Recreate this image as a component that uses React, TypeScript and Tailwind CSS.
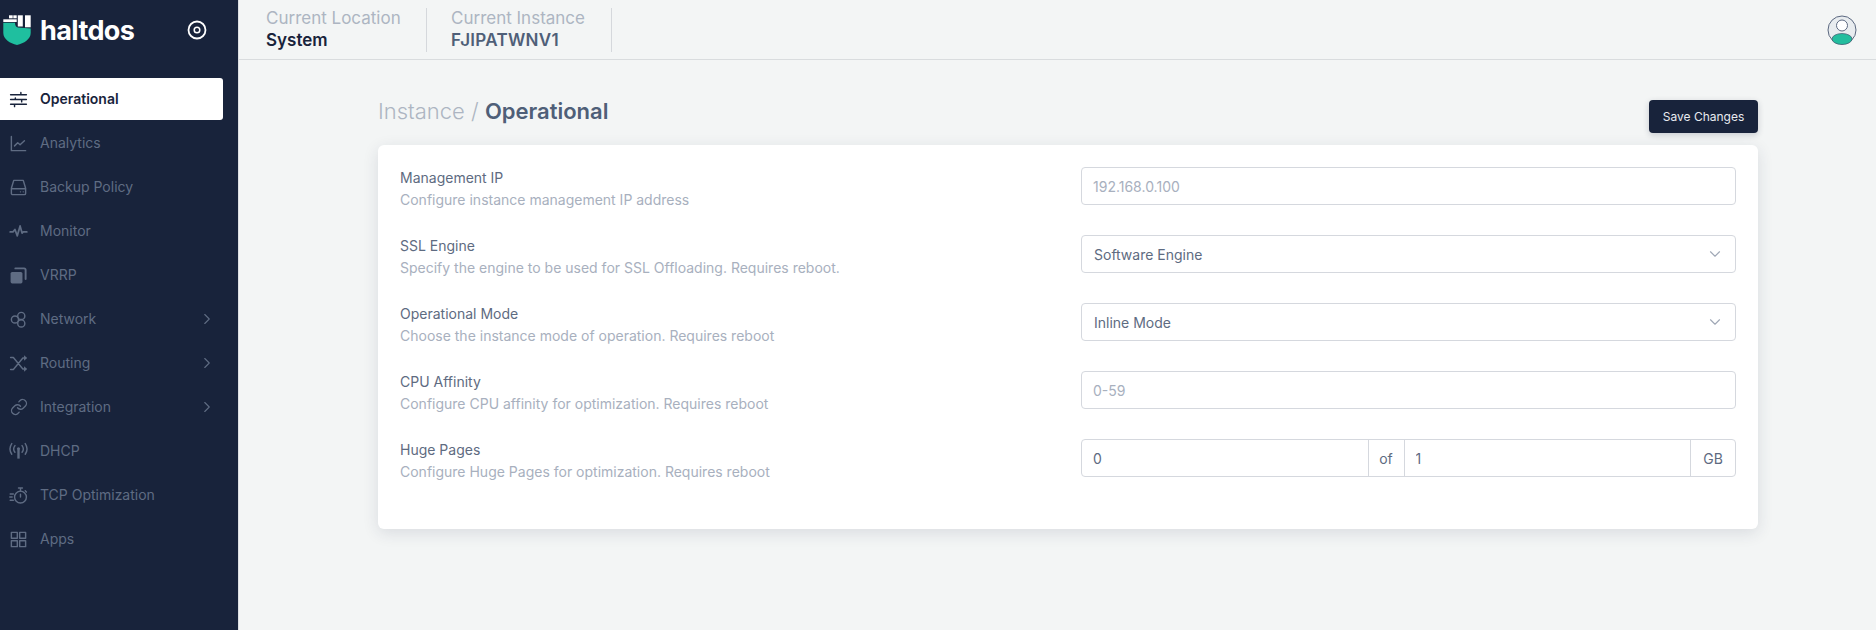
import React from "react";
import { ChevronDown, ChevronRight, Link } from "lucide-react";

function Svg({ children }: { children: React.ReactNode }) {
  return (
    <svg viewBox="0 0 24 24" fill="none" stroke="currentColor" strokeWidth="1.8" strokeLinecap="round" strokeLinejoin="round" className="h-[19px] w-[19px]">
      {children}
    </svg>
  );
}

const OperationalIcon = () => (
  <Svg>
    <path d="M2 6h20M15 3v3M2 12h20M16 12v3M8 12v-2M2 18h20M7 18v3" />
  </Svg>
);
const AnalyticsIcon = () => (
  <Svg>
    <path d="M3 3v18h18M7 15l4-4 3 2.500 5.500-5" />
  </Svg>
);
const BackupIcon = () => (
  <Svg>
    <path d="M6 3h12l3 10v6.500a1.500 1.500 0 0 1-1.500 1.500h-15A1.500 1.500 0 0 1 3 19.500V13L6 3zM3 13.500h18M14.500 17.500h.01M18 17.500h.01" />
  </Svg>
);
const MonitorIcon = () => (
  <Svg>
    <path d="M1.500 12.500H5l2.500-3 3 8L14 5l2.500 9 1.500-1.500h4.500" strokeWidth="2.200" />
  </Svg>
);
const VrrpIcon = () => (
  <Svg>
    <rect x="2" y="7.500" width="15" height="14.500" rx="2" fill="currentColor" stroke="none" />
    <path d="M8 3h11a2 2 0 0 1 2 2v11.500" strokeWidth="2.400" />
  </Svg>
);
const NetworkIcon = () => (
  <Svg>
    <circle cx="7.500" cy="12" r="4.500" />
    <circle cx="15.500" cy="7.500" r="4.500" />
    <circle cx="15.500" cy="17" r="4.500" />
  </Svg>
);
const RoutingIcon = () => (
  <Svg>
    <path d="M2 4.500h3.500l12 14.500H20M2 19.500h3.500l12-14.500H20" />
    <path d="M19 1.500l4 3.500-4 3.500zM19 15.500l4 3.500-4 3.500z" fill="currentColor" stroke="none" />
  </Svg>
);
const DhcpIcon = () => (
  <Svg>
    <circle cx="12" cy="8.500" r="2" fill="currentColor" stroke="none" />
    <path d="M12 10v11" strokeWidth="3" strokeLinecap="butt" />
    <path d="M7.500 4.500a7 7 0 0 0 0 8.500M16.500 4.500a7 7 0 0 1 0 8.500M3.500 2a12 12 0 0 0 0 13.500M20.500 2a12 12 0 0 1 0 13.500" />
  </Svg>
);
const TcpIcon = () => (
  <Svg>
    <circle cx="14.500" cy="14" r="7.500" />
    <path d="M14.500 14v-3.500M12 2.500h5M14.500 2.500v4M20.500 6l1.500 1.500M1.500 10h4M1 14h3M1.500 18h4" />
  </Svg>
);
const AppsIcon = () => (
  <Svg>
    <rect x="3" y="3" width="7.500" height="7.500" />
    <rect x="13.500" y="3" width="7.500" height="7.500" />
    <rect x="3" y="13.500" width="7.500" height="7.500" />
    <rect x="13.500" y="13.500" width="7.500" height="7.500" />
  </Svg>
);
const IntegrationIcon = () => <Link className="h-[18px] w-[18px]" strokeWidth={1.8} />;

const navItems = [
  { label: "Operational", icon: OperationalIcon, active: true },
  { label: "Analytics", icon: AnalyticsIcon },
  { label: "Backup Policy", icon: BackupIcon },
  { label: "Monitor", icon: MonitorIcon },
  { label: "VRRP", icon: VrrpIcon },
  { label: "Network", icon: NetworkIcon, sub: true },
  { label: "Routing", icon: RoutingIcon, sub: true },
  { label: "Integration", icon: IntegrationIcon, sub: true },
  { label: "DHCP", icon: DhcpIcon },
  { label: "TCP Optimization", icon: TcpIcon },
  { label: "Apps", icon: AppsIcon },
];

function Logo() {
  return (
    <svg width="28" height="30" viewBox="3 15 28 30" className="shrink-0">
      <path d="M3.300 22.800H15c0 2.500 1 4.500 3 4.700l12.700 1V33c0 6-6.700 10.500-13.700 12-7-1.500-13.700-6-13.700-12z" fill="#1fbf9f" />
      <rect x="9" y="15.300" width="3.700" height="3" fill="#fff" />
      <rect x="13.300" y="15.300" width="3.400" height="3" fill="#fff" />
      <rect x="3.300" y="19.300" width="13.400" height="2.700" fill="#fff" />
      <rect x="17.800" y="15.300" width="5" height="11.200" fill="#fff" />
      <rect x="25" y="15.300" width="5.700" height="12" fill="#fff" />
    </svg>
  );
}

function Avatar() {
  return (
    <svg width="30" height="30" viewBox="0 0 30 30">
      <circle cx="15" cy="15" r="14" fill="#e8ecef" stroke="#5b6880" strokeWidth="1" />
      <ellipse cx="15" cy="24" rx="10" ry="5.500" fill="#23bd9e" stroke="#41566e" strokeWidth="0.7" />
      <circle cx="15" cy="10.500" r="5.500" fill="#fff" stroke="#5b6880" strokeWidth="1" />
    </svg>
  );
}

function Field({ label, help, children }: { label: string; help: string; children: React.ReactNode }) {
  return (
    <div className="grid h-[68px] grid-cols-[1fr_655px]">
      <div>
        <div className="text-[14px] leading-[22px] text-[#5e6b81]">{label}</div>
        <div className="text-[14px] leading-[22px] text-[#a8b0be]">{help}</div>
      </div>
      <div>{children}</div>
    </div>
  );
}

function Select({ value }: { value: string }) {
  return (
    <div className="flex h-[38px] items-center justify-between rounded-[4px] border border-[#d5d8de] pl-[12px] pr-[11px] text-[14px] text-[#5e6b81]">
      <span>{value}</span>
      <ChevronDown className="h-[18px] w-[18px] text-[#a0a8b6]" strokeWidth={1.5} />
    </div>
  );
}

export default function App() {
  return (
    <div className="flex h-[630px] overflow-hidden bg-[#f3f5f5] font-['Inter',sans-serif]">
      {/* sidebar */}
      <aside className="w-[239px] shrink-0 border-r border-[#dcdfe2] bg-[#18233b]">
        <div className="flex h-[78px] items-start pt-[15px] pl-[3px]">
          <Logo />
          <span className="ml-[9px] text-[27px] font-bold leading-[32px] tracking-[-0.6px] text-white">haltdos</span>
          <svg viewBox="0 0 20 20" fill="none" stroke="#fff" className="ml-[53px] mt-[5px] h-[20px] w-[20px]">
            <circle cx="10" cy="10" r="8.500" strokeWidth="1.800" />
            <circle cx="10" cy="10" r="2.800" strokeWidth="1.500" />
          </svg>
        </div>
        <nav>
          {navItems.map((item) => {
            const Icon = item.icon;
            return (
              <div
                key={item.label}
                className={
                  item.active
                    ? "mb-[2px] flex h-[42px] w-[223px] items-center rounded-r-[3px] bg-white pl-[9px] text-[14px] font-semibold text-[#18233b]"
                    : "mb-[2px] flex h-[42px] w-[223px] items-center pl-[9px] text-[14px] text-[#5f6c83]"
                }
              >
                <span className="mr-[12px] flex h-[19px] w-[19px] shrink-0 items-center justify-center">
                  <Icon />
                </span>
                <span className="flex-1 pb-[2px]">{item.label}</span>
                {item.sub && <ChevronRight className="mr-[7px] h-[18px] w-[18px]" strokeWidth={1.5} />}
              </div>
            );
          })}
        </nav>
      </aside>

      <div className="flex min-w-0 flex-1 flex-col">
        {/* top bar */}
        <header className="flex h-[60px] shrink-0 items-center border-b border-[#d9dcde] pl-[27px] pr-[19px]">
          <div className="flex h-[44px] w-[161px] flex-col justify-center border-r border-[#d5d8dc] pb-[2px]">
            <span className="text-[17px] leading-[22px] text-[#adb5c2]">Current Location</span>
            <span className="text-[17px] font-semibold leading-[22px] text-[#18233b]">System</span>
          </div>
          <div className="ml-[24px] flex h-[44px] w-[161px] flex-col justify-center border-r border-[#d5d8dc] pb-[2px]">
            <span className="text-[17px] leading-[22px] text-[#adb5c2]">Current Instance</span>
            <span className="text-[17px] font-semibold leading-[22px] tracking-[0.3px] text-[#4f5f78]">FJIPATWNV1</span>
          </div>
          <div className="ml-auto">
            <Avatar />
          </div>
        </header>

        <main className="pl-[139px] pr-[118px]">
          <div className="flex h-[85px] items-start justify-between pt-[40px]">
            <h1 className="text-[22px] font-light leading-[22px] text-[#adb5c2]">
              Instance / <span className="font-semibold text-[#4f5f78]">Operational</span>
            </h1>
            <button className="h-[33px] w-[109px] rounded-[4px] bg-[#18233b] text-[12px] text-[#e8ebf0] shadow-[0_2px_6px_rgba(24,35,59,0.2)]">
              Save Changes
            </button>
          </div>

          <section className="h-[384px] rounded-[6px] bg-white px-[22px] pt-[22px] shadow-[0_4px_16px_rgba(30,45,70,0.12)]">
            <Field label="Management IP" help="Configure instance management IP address">
              <input
                placeholder="192.168.0.100"
                className="h-[38px] w-full rounded-[4px] border border-[#d5d8de] px-[11px] text-[14px] outline-none placeholder:text-[#a8b0be]"
              />
            </Field>
            <Field label="SSL Engine" help="Specify the engine to be used for SSL Offloading. Requires reboot.">
              <Select value="Software Engine" />
            </Field>
            <Field label="Operational Mode" help="Choose the instance mode of operation. Requires reboot">
              <Select value="Inline Mode" />
            </Field>
            <Field label="CPU Affinity" help="Configure CPU affinity for optimization. Requires reboot">
              <input
                placeholder="0-59"
                className="h-[38px] w-full rounded-[4px] border border-[#d5d8de] px-[11px] text-[14px] outline-none placeholder:text-[#a8b0be]"
              />
            </Field>
            <Field label="Huge Pages" help="Configure Huge Pages for optimization. Requires reboot">
              <div className="flex h-[38px] items-stretch rounded-[4px] border border-[#d5d8de] text-[14px] text-[#5e6b81]">
                <input defaultValue="0" className="w-0 flex-1 px-[11px] outline-none" />
                <span className="flex w-[37px] items-center justify-center border-x border-[#d5d8de]">of</span>
                <input defaultValue="1" className="w-0 flex-1 px-[11px] outline-none" />
                <span className="flex w-[45px] items-center justify-center border-l border-[#d5d8de]">GB</span>
              </div>
            </Field>
          </section>
        </main>
      </div>
    </div>
  );
}
